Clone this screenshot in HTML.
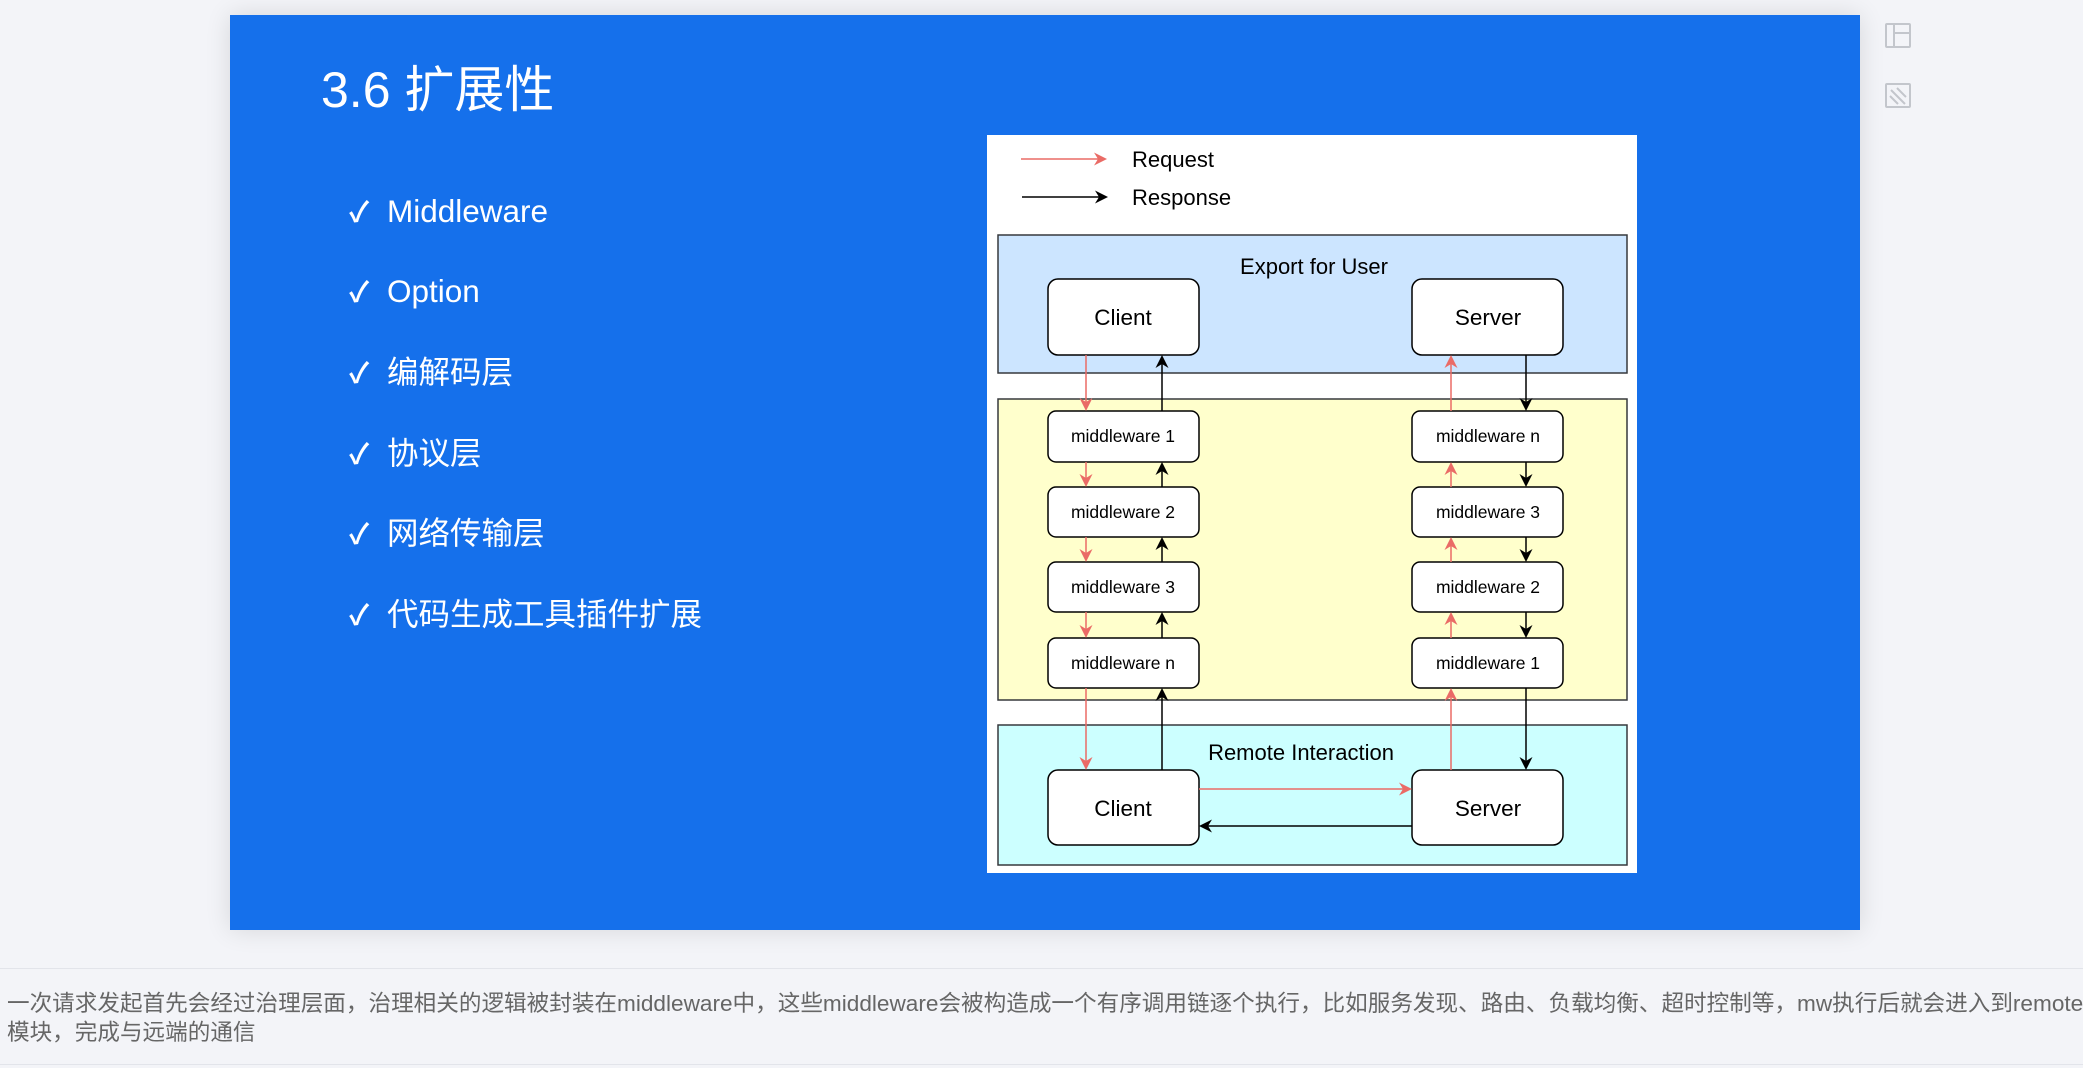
<!DOCTYPE html>
<html><head><meta charset="utf-8">
<style>
html,body{margin:0;padding:0;}
body{width:2083px;height:1068px;background:#f3f4f8;position:relative;overflow:hidden;font-family:"Liberation Sans","Noto Sans CJK SC",sans-serif;}
.slide{position:absolute;left:230px;top:15px;width:1630px;height:915px;background:#1570eb;box-shadow:0 0 24px rgba(0,0,0,0.12);}
.title{position:absolute;left:321px;top:60px;font-size:50px;color:#fff;line-height:60px;white-space:nowrap;}
.item{position:absolute;left:349px;color:#fff;font-size:31.5px;line-height:40px;white-space:nowrap;}
.item .ck{display:inline-block;width:38px;font-size:28px;font-weight:bold;}
.cap{position:absolute;left:0;top:968px;width:2083px;height:95px;border-top:1px solid #e2e4ea;border-bottom:1px solid #e2e4ea;}
.cap div{position:absolute;left:7px;font-size:22.6px;color:#666;white-space:nowrap;line-height:28px;}
</style></head><body>
<div class="slide"></div>
<div class="title">3.6 扩展性</div>
<div class="item" style="top:191px"><span class="ck">✓</span>Middleware</div>
<div class="item" style="top:271px"><span class="ck">✓</span>Option</div>
<div class="item" style="top:352px"><span class="ck">✓</span>编解码层</div>
<div class="item" style="top:433px"><span class="ck">✓</span>协议层</div>
<div class="item" style="top:513px"><span class="ck">✓</span>网络传输层</div>
<div class="item" style="top:594px"><span class="ck">✓</span>代码生成工具插件扩展</div>

<svg style="position:absolute;left:0;top:0" width="2083" height="1068" viewBox="0 0 2083 1068">
<defs>
<marker id="ar" markerWidth="13" markerHeight="13" refX="11" refY="6.5" orient="auto" markerUnits="userSpaceOnUse"><path d="M0,0 L13,6.5 L0,13 L4,6.5 Z" fill="#ea6b66"/></marker>
<marker id="ab" markerWidth="13" markerHeight="13" refX="11" refY="6.5" orient="auto" markerUnits="userSpaceOnUse"><path d="M0,0 L13,6.5 L0,13 L4,6.5 Z" fill="#000"/></marker>
</defs>
<rect x="987" y="135" width="650" height="738" fill="#fff"/>
<g font-family="Liberation Sans, sans-serif" fill="#000">
<line x1="1021" y1="159" x2="1105" y2="159" stroke="#ea6b66" stroke-width="1.5" marker-end="url(#ar)"/>
<line x1="1022" y1="197" x2="1106" y2="197" stroke="#000" stroke-width="1.5" marker-end="url(#ab)"/>
<text x="1132" y="167" font-size="22">Request</text>
<text x="1132" y="205" font-size="22">Response</text>
<rect x="998" y="235" width="629" height="138" fill="#cce5ff" stroke="#36393d" stroke-width="1.5"/>
<rect x="998" y="399" width="629" height="301" fill="#ffffcc" stroke="#36393d" stroke-width="1.5"/>
<rect x="998" y="725" width="629" height="140" fill="#ccffff" stroke="#36393d" stroke-width="1.5"/>
<text x="1314" y="274" font-size="22" text-anchor="middle">Export for User</text>
<text x="1301" y="760" font-size="22" text-anchor="middle">Remote Interaction</text>
<g fill="#fff" stroke="#000" stroke-width="1.5">
<rect x="1048" y="279" width="151" height="76" rx="10"/>
<rect x="1412" y="279" width="151" height="76" rx="10"/>
<rect x="1048" y="770" width="151" height="75" rx="10"/>
<rect x="1412" y="770" width="151" height="75" rx="10"/>
<rect x="1048" y="411" width="151" height="51" rx="8"/>
<rect x="1048" y="487" width="151" height="50" rx="8"/>
<rect x="1048" y="562" width="151" height="50" rx="8"/>
<rect x="1048" y="638" width="151" height="50" rx="8"/>
<rect x="1412" y="411" width="151" height="51" rx="8"/>
<rect x="1412" y="487" width="151" height="50" rx="8"/>
<rect x="1412" y="562" width="151" height="50" rx="8"/>
<rect x="1412" y="638" width="151" height="50" rx="8"/>
</g>
<g font-size="22.5" text-anchor="middle">
<text x="1123" y="325">Client</text><text x="1488" y="325">Server</text>
<text x="1123" y="816">Client</text><text x="1488" y="816">Server</text>
</g>
<g font-size="17.5" text-anchor="middle">
<text x="1123" y="442">middleware 1</text><text x="1123" y="518">middleware 2</text>
<text x="1123" y="593">middleware 3</text><text x="1123" y="669">middleware n</text>
<text x="1488" y="442">middleware n</text><text x="1488" y="518">middleware 3</text>
<text x="1488" y="593">middleware 2</text><text x="1488" y="669">middleware 1</text>
</g>
<g stroke="#ea6b66" stroke-width="1.5" marker-end="url(#ar)">
<line x1="1086" y1="355" x2="1086" y2="409"/>
<line x1="1086" y1="462" x2="1086" y2="485"/>
<line x1="1086" y1="537" x2="1086" y2="560"/>
<line x1="1086" y1="612" x2="1086" y2="636"/>
<line x1="1086" y1="688" x2="1086" y2="768"/>
<line x1="1451" y1="411" x2="1451" y2="357"/>
<line x1="1451" y1="487" x2="1451" y2="464"/>
<line x1="1451" y1="562" x2="1451" y2="539"/>
<line x1="1451" y1="638" x2="1451" y2="614"/>
<line x1="1451" y1="770" x2="1451" y2="690"/>
<line x1="1199" y1="789" x2="1410" y2="789"/>
</g>
<g stroke="#000" stroke-width="1.5" marker-end="url(#ab)">
<line x1="1162" y1="411" x2="1162" y2="357"/>
<line x1="1162" y1="487" x2="1162" y2="464"/>
<line x1="1162" y1="562" x2="1162" y2="539"/>
<line x1="1162" y1="638" x2="1162" y2="614"/>
<line x1="1162" y1="770" x2="1162" y2="690"/>
<line x1="1526" y1="355" x2="1526" y2="409"/>
<line x1="1526" y1="462" x2="1526" y2="485"/>
<line x1="1526" y1="537" x2="1526" y2="560"/>
<line x1="1526" y1="612" x2="1526" y2="636"/>
<line x1="1526" y1="688" x2="1526" y2="768"/>
<line x1="1412" y1="826" x2="1201" y2="826"/>
</g>
</g>
<g fill="none" stroke="#c3c6cc" stroke-width="2">
<rect x="1886" y="24" width="24" height="23" rx="1"/>
<line x1="1894" y1="24" x2="1894" y2="47"/>
<line x1="1894" y1="33" x2="1910" y2="33"/>
<rect x="1886" y="84" width="24" height="23" rx="1"/>
<line x1="1890" y1="96" x2="1898" y2="104"/>
<line x1="1891" y1="90" x2="1905" y2="104"/>
<line x1="1897" y1="88" x2="1906" y2="97"/>
</g>
</svg>

<div class="cap">
<div style="top:21px">一次请求发起首先会经过治理层面，治理相关的逻辑被封装在middleware中，这些middleware会被构造成一个有序调用链逐个执行，比如服务发现、路由、负载均衡、超时控制等，mw执行后就会进入到remote</div>
<div style="top:50px">模块，完成与远端的通信</div>
</div>
</body></html>
